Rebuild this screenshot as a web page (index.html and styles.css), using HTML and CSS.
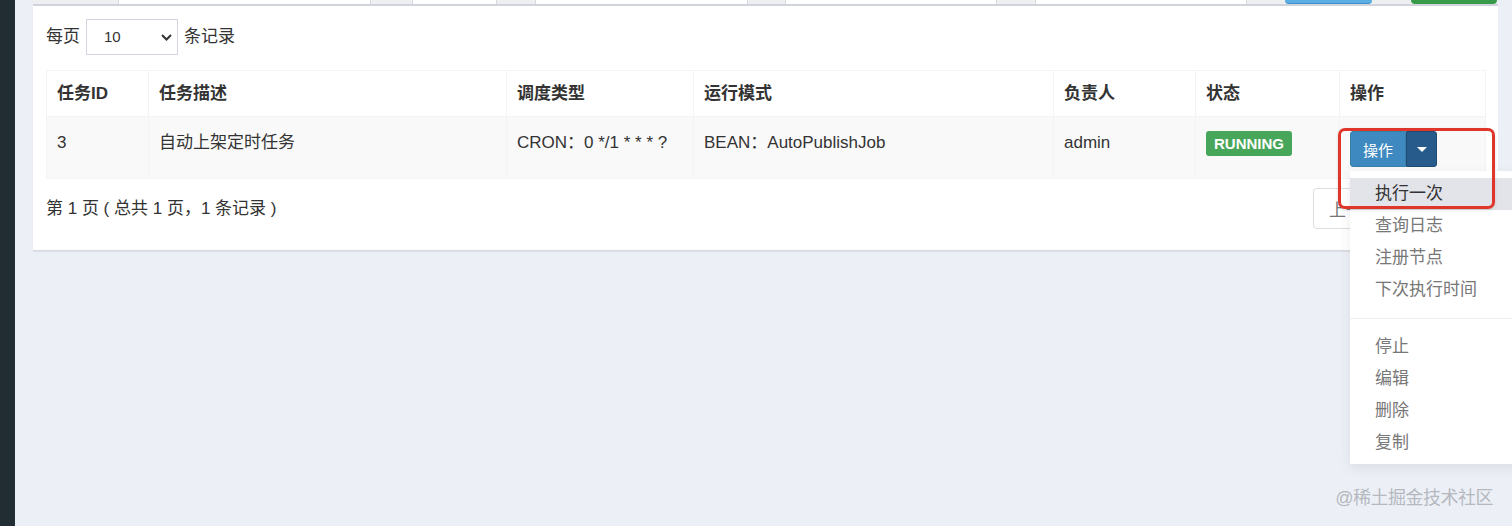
FILE: index.html
```html
<!DOCTYPE html>
<html lang="zh-CN">
<head>
<meta charset="utf-8">
<title>任务管理</title>
<link rel="stylesheet" href="styles.css">
</head>
<body>
<div class="app">
  <aside class="sidebar"></aside>
  <main class="content">
    <div class="prev-box">
      <span class="seg g"></span><span class="seg w"></span><span class="seg g"></span><span class="seg w"></span>
      <span class="seg g"></span><span class="seg w"></span><span class="seg g"></span><span class="seg w"></span>
      <span class="seg g"></span><span class="seg w"></span><span class="seg g"></span><span class="seg blue"></span>
      <span class="seg g"></span><span class="seg green"></span>
    </div>
    <section class="box">
      <div class="length-row">
        <span>每页</span>
        <div class="select">
          <span>10</span>
          <svg class="chev" width="11" height="7" viewBox="0 0 11 7"><path d="M1 1l4.5 4.5L10 1" fill="none" stroke="#333" stroke-width="2"/></svg>
        </div>
        <span>条记录</span>
      </div>
      <table class="grid">
        <colgroup>
          <col class="c1"><col class="c2"><col class="c3"><col class="c4"><col class="c5"><col class="c6"><col class="c7">
        </colgroup>
        <thead>
          <tr><th>任务ID</th><th>任务描述</th><th>调度类型</th><th>运行模式</th><th>负责人</th><th>状态</th><th>操作</th></tr>
        </thead>
        <tbody>
          <tr>
            <td>3</td>
            <td>自动上架定时任务</td>
            <td>CRON：0 */1 * * * ?</td>
            <td>BEAN：AutoPublishJob</td>
            <td>admin</td>
            <td><span class="badge">RUNNING</span></td>
            <td>
              <div class="btn-group">
                <button class="btn">操作</button><button class="btn toggle"><span class="caret"></span></button>
                <ul class="menu">
                  <li class="active">执行一次</li>
                  <li>查询日志</li>
                  <li>注册节点</li>
                  <li>下次执行时间</li>
                  <li class="divider"></li>
                  <li>停止</li>
                  <li>编辑</li>
                  <li>删除</li>
                  <li>复制</li>
                </ul>
                <div class="annot"></div>
              </div>
            </td>
          </tr>
        </tbody>
      </table>
      <div class="pager-row">
        <span>第 1 页 ( 总共 1 页，1 条记录 )</span>
        <div class="pager"><button class="pg">上一页</button><button class="pg">下一页</button></div>
      </div>
    </section>
  </main>
  <div class="watermark">@稀土掘金技术社区</div>
</div>
</body>
</html>
```
FILE: styles.css
```css
html, body {
  margin: 0;
  padding: 0;
  width: 1512px;
  height: 526px;
  overflow: hidden;
}
body {
  font-family: "Liberation Sans", "Noto Sans CJK SC", sans-serif;
  color: #333;
  font-size: 17px;
  background: #ecf0f6;
}
.app {
  display: flex;
  height: 526px;
  position: relative;
}
.sidebar {
  width: 15px;
  flex: none;
  background: #222d33;
}
.content {
  flex: 1;
  padding: 0 15px 0 18px;
}
.prev-box {
  display: grid;
  grid-template-columns: 85px 253px 41px 85px 38px 213px 37px 212px 38px 212px 38px 87px 39px 86px;
  height: 4px;
  border-bottom: 2px solid #d0d3da;
}
.seg.g { background: #eeeff1; }
.seg.w { background: #fff; border-left: 1px solid #d6d9df; border-right: 1px solid #d6d9df; }
.seg.blue { background: #5aaee4; border-radius: 0 0 4px 4px; border-bottom: 1px solid #3d93c9; }
.seg.green { background: #3a9a4b; border-radius: 0 0 4px 4px; }
.box {
  background: #fff;
  padding: 13px 12px 21px 13px;
  border-bottom: 1px solid #d6d9df;
  box-shadow: 0 1px 1px rgba(0,0,0,0.06);
}
.length-row {
  display: flex;
  align-items: center;
  gap: 6px;
  line-height: 24px;
}
.select {
  width: 92px;
  height: 36px;
  box-sizing: border-box;
  border: 1px solid #d2d6de;
  display: flex;
  align-items: center;
  justify-content: space-between;
  padding: 0 5px 0 17px;
  font-size: 15px;
  color: #333;
}
.grid {
  margin-top: 15px;
  width: 1439px;
  table-layout: fixed;
  border-collapse: collapse;
  border: 1px solid #f4f4f4;
}
.c1 { width: 102px; }
.c2 { width: 358px; }
.c3 { width: 187px; }
.c4 { width: 360px; }
.c5 { width: 142px; }
.c6 { width: 144px; }
.c7 { width: 146px; }
.grid th, .grid td {
  border: 1px solid #f4f4f4;
  text-align: left;
  vertical-align: top;
  line-height: 24px;
}
.grid th {
  padding: 11px 11px 10px 10px;
  font-weight: bold;
  background: #fff;
}
.grid td {
  padding: 14px 11px 11px 10px;
  background: #f9f9f9;
  height: 36px;
}
.badge {
  display: inline-block;
  background: #48a65a;
  color: #fff;
  font-weight: bold;
  font-size: 15px;
  line-height: 25px;
  padding: 0 8px;
  border-radius: 3px;
}
.btn-group {
  position: relative;
  display: inline-flex;
}
.btn {
  font-family: inherit;
  border: 1px solid #367fa9;
  background: #3e8ac0;
  color: #fff;
  height: 36px;
  width: 56px;
  font-size: 15px;
  padding: 0;
  border-radius: 3px 0 0 3px;
  margin: 0;
}
.btn.toggle {
  width: 31px;
  background: #275b8b;
  border-color: #1f4a72;
  border-radius: 0 3px 3px 0;
  display: flex;
  align-items: center;
  justify-content: center;
}
.caret {
  width: 0;
  height: 0;
  border-left: 5px solid transparent;
  border-right: 5px solid transparent;
  border-top: 5px solid #fff;
}
.menu {
  position: absolute;
  top: calc(100% + 4px);
  left: 0;
  width: 200px;
  margin: 0;
  padding: 7px 0 5px;
  list-style: none;
  background: #fff;
  box-shadow: 0 4px 12px rgba(0,0,0,0.08);
  z-index: 2;
}
.menu li {
  padding: 4px 25px;
  line-height: 24px;
  color: #777;
  font-size: 17px;
}
.menu li.active {
  background: #e2e4e9;
  color: #333;
}
.menu li.divider {
  height: 1px;
  padding: 0;
  margin: 12px 0;
  background: #eceef1;
}
.annot {
  position: absolute;
  left: -12px;
  top: -3px;
  width: 157px;
  height: 81px;
  box-sizing: border-box;
  border: 3px solid #e0352b;
  border-radius: 7px;
  z-index: 3;
  box-shadow: 0 1px 3px rgba(0,0,0,0.15);
}
.pager-row {
  display: flex;
  align-items: center;
  justify-content: space-between;
  margin-top: 9px;
  line-height: 24px;
}
.pager {
  display: flex;
}
.pg {
  font-family: inherit;
  font-size: 17px;
  color: #777;
  background: #fff;
  border: 1px solid #ddd;
  height: 41px;
  width: 87px;
  padding: 0 0 0 15px;
  text-align: left;
  margin: 0 0 0 -1px;
}
.pg:first-child { border-radius: 4px 0 0 4px; }
.pg:last-child { border-radius: 0 4px 4px 0; }
.watermark {
  position: absolute;
  right: 19px;
  bottom: 16px;
  font-size: 18px;
  line-height: 24px;
  color: #b5b8be;
  letter-spacing: -0.5px;
}
```
